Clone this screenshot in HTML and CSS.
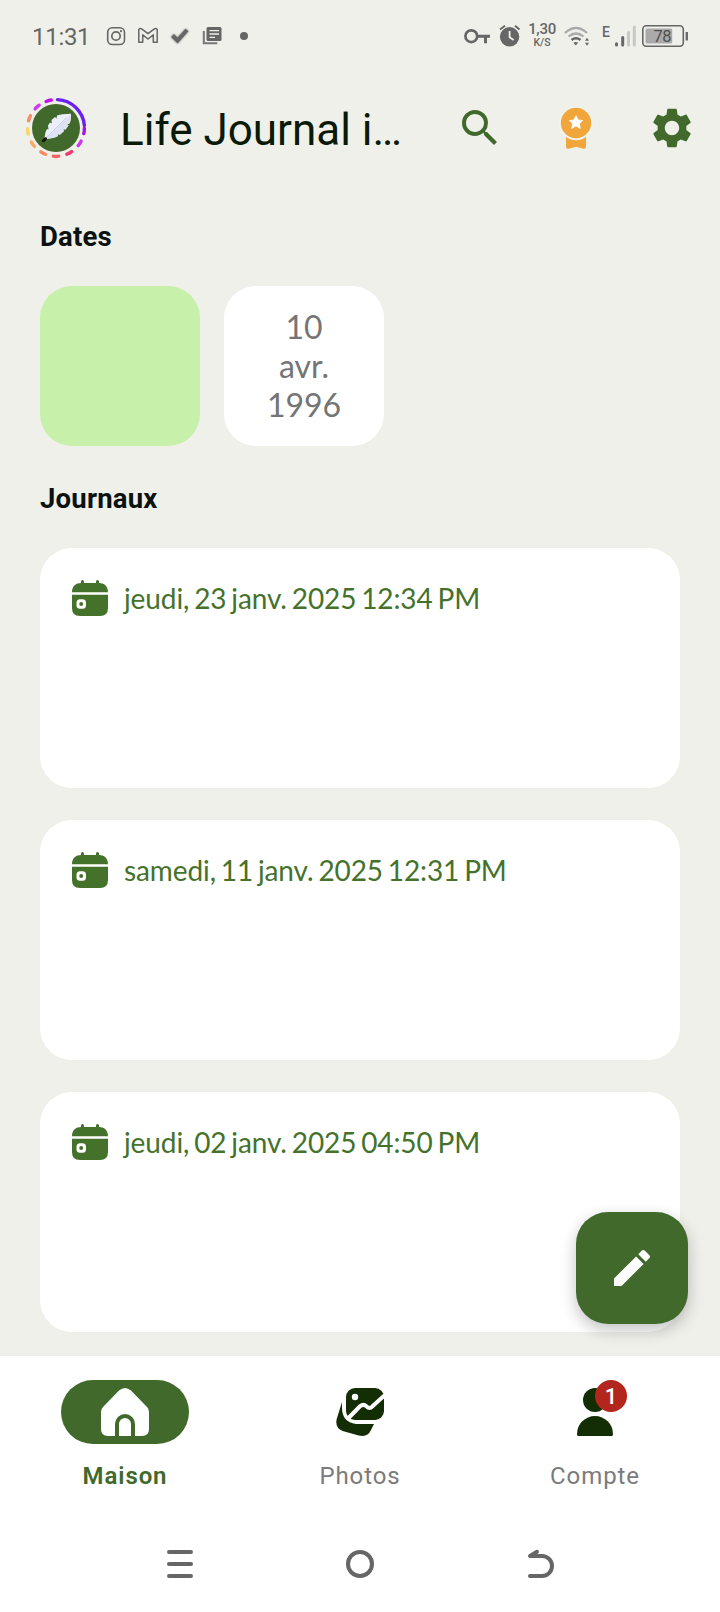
FILE: index.html
```html
<!DOCTYPE html>
<html lang="fr">
<head>
<meta charset="utf-8">
<title>Life Journal</title>
<link rel="stylesheet" href="styles.css">
</head>
<body>
<div class="screen">
  <header class="status">
    <span class="clock">11:31</span>
    <svg class="ico" width="24" height="24" viewBox="104 24 24 24" fill="none" stroke="#666"><rect x="107.7" y="27.7" width="16.8" height="16.8" rx="4.6" stroke-width="1.6"/><circle cx="116" cy="36" r="4.2" stroke-width="1.7"/><circle cx="121" cy="31.2" r="1.1" fill="#666" stroke="none"/></svg>
    <svg class="ico" width="24" height="24" viewBox="136 24 24 24" fill="none" stroke="#666" stroke-width="1.5" stroke-linejoin="round"><path d="M138.8 42.2V29.5q1.5-1.8 3.5-.2l5.7 4.4 5.7-4.4q2-1.6 3.5.2v12.7h-3.9v-7.4l-5.3 4.2-5.3-4.2v7.4z"/></svg>
    <svg class="ico check" width="24" height="24" viewBox="168 24 24 24" fill="none" stroke="#666" stroke-width="4"><path d="M172.500 35.500l5 5L187 30"/></svg>
    <svg class="ico" width="24" height="24" viewBox="200 24 24 24"><path d="M203.800 31v12.300h13.500" fill="none" stroke="#777" stroke-width="2"/><rect x="206.500" y="27" width="15" height="14" rx="1.500" fill="#666"/><path d="M209.500 30.700h9.500M209.500 34h9.500M209.500 37.300h5.500" stroke="#eff0ea" stroke-width="1.300"/></svg>
    <svg class="ico" width="24" height="24" viewBox="232 24 24 24"><circle cx="244" cy="36" r="4" fill="#666"/></svg>
    <svg class="ico system" width="64" height="32" viewBox="462 20 64 32"><g fill="none" stroke="#666"><circle cx="471.300" cy="36.200" r="5.900" stroke-width="2.700"/><path d="M477 36.200h13M485.500 36.200v7" stroke-width="3"/><path d="M500 29.500l5-3.700M515 25.800l4.500 3.700" stroke-width="2"/></g><circle cx="509.600" cy="36.800" r="9.700" fill="#666"/><path d="M509.600 31v6.300l4 2.700" fill="none" stroke="#eff0ea" stroke-width="1.800"/></svg>
    <div class="speed"><span>1,30</span><small>K/S</small></div>
    <svg class="ico" width="44" height="32" viewBox="558 20 44 32"><g fill="none"><path d="M565 33q11-10 22 0" stroke="#aaa" stroke-width="2.200"/><path d="M568.500 36.500q7.500-6 15 0" stroke="#aaa" stroke-width="2.200"/><path d="M571.500 40q4.500-3.400 9 0" stroke="#666" stroke-width="2.300"/></g><path d="M573.500 42.700q2.300-1.300 4.600 0L575.800 45.500zM585 40.800l2-3 2 3zM585 42.700l2 3 2-3z" fill="#666"/></svg>
    <span class="network">E</span>
    <svg class="ico" width="78" height="32" viewBox="612 20 78 32"><g stroke-linecap="round" stroke-width="3"><path d="M616.500 43.800v1.100M622.700 37.500v7.400" stroke="#666"/><path d="M628.500 32.500v12.400M634.300 27v18" stroke="#c8c9c4"/></g><rect x="642.800" y="25.800" width="40.500" height="20.500" rx="3.500" fill="none" stroke="#666" stroke-width="1.600"/><rect x="645.500" y="28.500" width="26.700" height="15" rx="1.500" fill="#aaa"/><path d="M686.800 32v8.500" stroke="#666" stroke-width="2.300"/><text x="653.600" y="41.500" font-size="16.500" fill="#505050" textLength="18">78</text></svg>
  </header>

  <div class="appbar">
    <svg class="avatar" width="64" height="64" viewBox="-32 -32 64 64">
      <circle r="24" fill="#40692b"/>
      <g fill="none" stroke-width="3.400" stroke-linecap="round">
        <path d="M1.500-28.400A28.400 28.400 0 0 1 28.400-2.500" stroke="#6a22ee"/>
        <path d="M28.200-2.700Q28.700 0 28.200 2.700" stroke="#a514e6" transform="rotate(6)"/>
        <path d="M28.200-2.700Q28.700 0 28.200 2.700" stroke="#cc35f2" transform="rotate(33)"/>
        <path d="M28.200-2.700Q28.700 0 28.200 2.700" stroke="#f5386f" transform="rotate(62)"/>
        <path d="M28.200-2.700Q28.700 0 28.200 2.700" stroke="#fa6161" transform="rotate(90)"/>
        <path d="M28.200-2.700Q28.700 0 28.200 2.700" stroke="#fa8a68" transform="rotate(117)"/>
        <path d="M28.200-2.700Q28.700 0 28.200 2.700" stroke="#fba964" transform="rotate(145)"/>
        <path d="M28.200-2.700Q28.700 0 28.200 2.700" stroke="#fbd565" transform="rotate(173)"/>
        <path d="M28.200-2.700Q28.700 0 28.200 2.700" stroke="#fa8a68" transform="rotate(200)"/>
        <path d="M28.200-2.700Q28.700 0 28.200 2.700" stroke="#d03af2" transform="rotate(228)"/>
        <path d="M28.200-2.700Q28.700 0 28.200 2.700" stroke="#c712f0" transform="rotate(255)"/>
      </g>
      <path d="M-11.500 10.500C-11 6-10.500 3-9 1l1.500.5-.5-4 2-3 1.800 1-.3-3.500 3.500-3 1.500 1.500.5-3C4-14 9-14 15-14.300c.2 4-.3 7-1.500 9.800l-2.500.5 1.500 1.500-3 4-2.500-.3 1 1.800-4 3.700-2.500-.8.500 2C-2 10-7 11-11.500 10.500z" fill="#eceffb"/>
      <path d="M15-14.300c.2 4-.3 7-1.500 9.800l-2.500.5 1.500 1.500-3 4-2.500-.3 1 1.800-4 3.700-2.500-.8.500 2C-2 10-7 11-11.500 10.500z" fill="#dfe2f2"/>
      <path d="M-12.500 12.500L10-10" stroke="#c9cee6" stroke-width=".8"/><path d="M-12.800 13l2.500-2.500" stroke="#111" stroke-width="2.500" stroke-linecap="round"/>
    </svg>
    <h1 class="title">Life Journal i…</h1>
    <svg class="action" width="48" height="48" viewBox="0 0 24 24" fill="#40692b"><path d="M15.500 14h-.79l-.28-.27A6.471 6.471 0 0 0 16 9.500 6.500 6.500 0 1 0 9.500 16c1.610 0 3.090-.59 4.230-1.570l.27.28v.79l5 4.990L20.490 19l-4.990-5zm-6 0C7.010 14 5 11.990 5 9.500S7.010 5 9.500 5 14 7.010 14 9.500 11.990 14 9.500 14z"/></svg>
    <svg class="action" width="48" height="48" viewBox="552 104 48 48"><path d="M566 134v12.500q0 2.700 2.600 2.300l7.400-2 7.400 2q2.600.4 2.600-2.300V134z" fill="#f0a63a"/><circle cx="576" cy="123.200" r="17" fill="#f4f4ef"/><circle cx="576" cy="123" r="15.200" fill="#f0a63a"/><path d="M576 115.600l2.100 4.400 4.700.5-3.500 3.200 1 4.700-4.300-2.500-4.300 2.500 1-4.700-3.500-3.200 4.700-.5z" fill="#fff" stroke="#fff" stroke-width=".8" stroke-linejoin="round"/></svg>
    <svg class="action" width="48" height="48" viewBox="0 0 24 24" fill="#40692b"><path d="M19.140 12.940c.04-.3.060-.61.060-.94 0-.32-.02-.64-.07-.94l2.030-1.580c.18-.14.23-.41.120-.61l-1.920-3.320c-.12-.22-.37-.29-.59-.22l-2.390.96c-.5-.38-1.030-.7-1.620-.94l-.36-2.540c-.04-.24-.24-.41-.48-.41h-3.840c-.24 0-.43.17-.47.41l-.36 2.540c-.59.24-1.130.57-1.620.94l-2.390-.96c-.22-.08-.47 0-.59.22L2.740 8.870c-.12.21-.08.47.12.61l2.030 1.580c-.05.3-.09.63-.09.94s.02.64.07.94l-2.030 1.580c-.18.14-.23.41-.12.61l1.920 3.320c.12.22.37.29.59.22l2.390-.96c.5.38 1.030.7 1.620.94l.36 2.540c.05.24.24.41.48.41h3.840c.24 0 .44-.17.47-.41l.36-2.540c.59-.24 1.130-.56 1.620-.94l2.390.96c.22.080.47 0 .59-.22l1.920-3.320c.12-.22.070-.47-.12-.61l-2.010-1.580zM12 15.600c-1.980 0-3.600-1.620-3.600-3.600s1.620-3.600 3.600-3.600 3.600 1.620 3.600 3.600-1.620 3.600-3.600 3.600z"/></svg>
  </div>

  <main class="content">
    <h2 class="heading">Dates</h2>
    <div class="tiles">
      <div class="tile tile-active"></div>
      <div class="tile">10<br>avr.<br>1996</div>
    </div>
    <h2 class="heading">Journaux</h2>
    <div class="entries">
      <article class="entry">
        <svg width="36" height="36" viewBox="0 0 36 36"><path d="M0 12.300C0 6 4 3 9 3V1.500a1.500 1.500 0 0 1 3 0V3h12V1.500a1.500 1.500 0 0 1 3 0V3c5 0 9 3 9 9.300zM0 14.700h36V28q0 8-8 8H8Q0 36 0 28z" fill="#44722a"/><rect x="4.500" y="19.300" width="9.500" height="9.500" rx="3.500" fill="#fff"/><circle cx="9.200" cy="24" r="2" fill="#44722a"/></svg>
        <span>jeudi, 23 janv. 2025 12:34 PM</span>
      </article>
      <article class="entry">
        <svg width="36" height="36" viewBox="0 0 36 36"><path d="M0 12.300C0 6 4 3 9 3V1.500a1.500 1.500 0 0 1 3 0V3h12V1.500a1.500 1.500 0 0 1 3 0V3c5 0 9 3 9 9.300zM0 14.700h36V28q0 8-8 8H8Q0 36 0 28z" fill="#44722a"/><rect x="4.500" y="19.300" width="9.500" height="9.500" rx="3.500" fill="#fff"/><circle cx="9.200" cy="24" r="2" fill="#44722a"/></svg>
        <span>samedi, 11 janv. 2025 12:31 PM</span>
      </article>
      <article class="entry">
        <svg width="36" height="36" viewBox="0 0 36 36"><path d="M0 12.300C0 6 4 3 9 3V1.500a1.500 1.500 0 0 1 3 0V3h12V1.500a1.500 1.500 0 0 1 3 0V3c5 0 9 3 9 9.300zM0 14.700h36V28q0 8-8 8H8Q0 36 0 28z" fill="#44722a"/><rect x="4.500" y="19.300" width="9.500" height="9.500" rx="3.500" fill="#fff"/><circle cx="9.200" cy="24" r="2" fill="#44722a"/></svg>
        <span>jeudi, 02 janv. 2025 04:50 PM</span>
      </article>
    </div>
    <div class="fab"><svg width="48" height="48" viewBox="0 0 24 24" fill="#fff"><path d="M3 17.250V21h3.750L17.810 9.940l-3.750-3.750L3 17.250zM20.710 7.040a1 1 0 0 0 0-1.410l-2.340-2.340a1 1 0 0 0-1.410 0l-1.830 1.830 3.750 3.750 1.830-1.830z"/></svg></div>
  </main>

  <nav class="tabs">
    <div class="tab tab-active">
      <div class="pill"><svg width="48" height="48" viewBox="0 0 48 48"><path d="M0 24q0-3 2-5L18 2.500q6-5 12 0L46 19q2 2 2 5v17q0 7-7 7H7q-7 0-7-7z" fill="#fff"/><path d="M16 48V36a8 8 0 0 1 16 0v12" fill="none" stroke="#40692b" stroke-width="4"/></svg></div>
      <span class="label">Maison</span>
    </div>
    <div class="tab">
      <div class="pill"><svg width="48" height="48" viewBox="0 0 48 48"><path d="M6 14L.7 31q-2 9 6 12l16 4.500q9 2 12-5L38 36H20Q6 34 6 20z" fill="#132d05"/><rect x="10" y="0" width="38" height="32" rx="9" fill="#132d05"/><path d="M12 30.500L24 18.300q3.500-3 6.500 0t6 0L49 7" fill="none" stroke="#fff" stroke-width="4"/><circle cx="19" cy="9" r="3.200" fill="#fff"/></svg></div>
      <span class="label">Photos</span>
    </div>
    <div class="tab">
      <div class="pill"><svg width="48" height="48" viewBox="0 0 48 48" fill="#132d05"><circle cx="24" cy="12" r="12"/><path d="M6 46a18 18 0 0 1 36 0q0 2-1 2H7q-1 0-1-2z"/></svg><span class="badge">1</span></div>
      <span class="label">Compte</span>
    </div>
  </nav>
  <footer class="system-nav">
    <svg width="32" height="32" viewBox="164 1548 32 32" stroke="#666" stroke-width="4" stroke-linecap="round"><path d="M169 1552h22M169 1564h22M169 1576h22"/></svg>
    <svg width="32" height="32" viewBox="344 1548 32 32" fill="none" stroke="#666" stroke-width="4"><circle cx="360" cy="1564" r="12"/></svg>
    <svg width="32" height="32" viewBox="524 1548 32 32" fill="none" stroke="#666" stroke-width="4" stroke-linecap="round" stroke-linejoin="round"><path d="M537 1551.800l-7 4.200h12a10 10 0 0 1 0 20H530"/></svg>
  </footer>
</div>
</body>
</html>
```
FILE: styles.css
```css
* { box-sizing: border-box; }
body { margin: 0; background: #eff0ea; font-family: Roboto, "Liberation Sans", sans-serif; }
svg { display: block; flex: none; }
.screen { width: 720px; height: 1612px; display: flex; flex-direction: column; overflow: hidden; }

.status { height: 72px; flex: none; display: flex; align-items: center; padding-left: 32px; color: #666; }
.clock { width: 72px; font-size: 24px; line-height: 28px; letter-spacing: -.3px; padding-top: 2px; }
.status .ico + .ico { margin-left: 8px; }
.check { filter: drop-shadow(0 0 1px #777); }
.status .ico.system { margin-left: auto; }
.speed { width: 32px; display: flex; flex-direction: column; align-items: center; font-size: 15px; line-height: 15px; font-weight: 500; letter-spacing: -.3px; padding-bottom: 3px; }
.speed small { font-size: 10.500px; line-height: 10px; letter-spacing: 0; padding-top: 1px; }
.network { width: 10px; font-size: 14px; font-weight: 500; line-height: 16px; margin: 0 0 9px; }
.status .ico:last-child { margin-right: 30px; }

.appbar { height: 112px; flex: none; display: flex; align-items: center; padding: 0 24px; }
.title { margin: 0; margin-left: 32px; width: 336px; font-size: 44px; line-height: 52px; font-weight: 400; color: #0b1a08; padding-top: 3px; white-space: nowrap; }
.action + .action { margin-left: 48px; }

.content { height: 1172px; flex: none; padding: 32px 40px 0; position: relative; }
.heading { margin: 0; height: 40px; font-size: 27.500px; line-height: 42px; font-weight: 700; letter-spacing: .2px; color: #0b1210; }
.tiles { display: flex; gap: 24px; padding: 30px 0 32px; }
.tile { width: 160px; height: 160px; border-radius: 32px; background: #fff; text-align: center; display: grid; place-content: center; padding-bottom: 2px; font-family: Lato, sans-serif; font-size: 32px; line-height: 39px; color: #757575; }
.tile-active { background: #c7f0ab; }
.entries { display: flex; flex-direction: column; gap: 32px; padding-top: 30px; }
.entry { height: 240px; border-radius: 32px; background: #fff; padding: 32px; display: flex; align-items: flex-start; gap: 16px; font-family: Lato, sans-serif; font-size: 28px; line-height: 36px; letter-spacing: -.1px; word-spacing: -2.200px; color: #44722a; white-space: nowrap; }
.fab { position: absolute; right: 32px; bottom: 32px; width: 112px; height: 112px; border-radius: 32px; background: #40692b; display: grid; place-items: center; box-shadow: 0 6px 16px rgba(0,0,0,.24); }

.tabs { height: 144px; flex: none; background: #fff; display: grid; grid-template-columns: repeat(3, 235px); justify-content: center; padding-top: 24px; }
.tab { display: flex; flex-direction: column; align-items: center; gap: 18px; }
.pill { position: relative; width: 128px; height: 64px; border-radius: 32px; display: grid; place-items: center; }
.tab-active .pill { background: #40692b; }
.label { font-size: 24px; line-height: 28px; letter-spacing: .9px; color: #7b7b7b; }
.tab-active .label { font-weight: 600; color: #40692b; }
.badge { position: absolute; left: 64px; top: 0; width: 32px; height: 32px; border-radius: 50%; background: #b3261e; color: #fff; font-size: 22px; line-height: 33px; font-weight: 500; text-align: center; }
.system-nav { height: 112px; flex: none; background: #fff; display: flex; justify-content: center; gap: 148px; padding-top: 48px; }
```
